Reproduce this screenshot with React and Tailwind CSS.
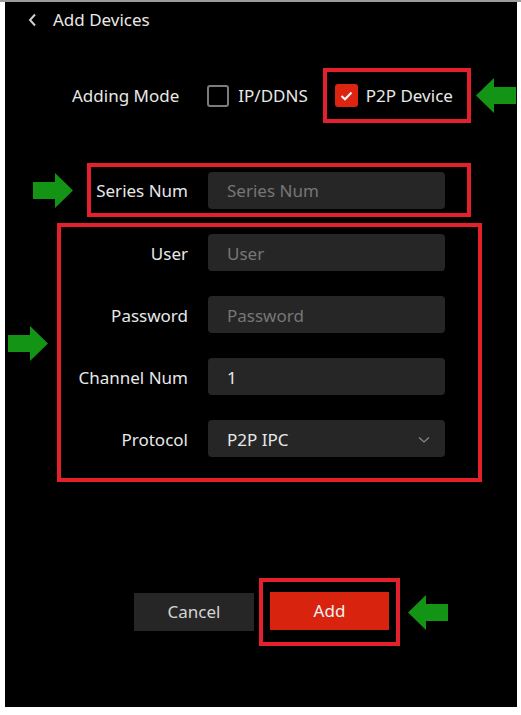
import { useState } from 'react';

const font = { fontFamily: '"Noto Sans", "Open Sans", sans-serif' };

const GreenArrow = ({ dir = 'right' }) => (
  <svg width="40" height="35" viewBox="0 0 40 35" className="shrink-0">
    {dir === 'right' ? (
      <polygon points="0,9 22,9 22,0 40,17.5 22,35 22,26 0,26" fill="#149414" />
    ) : (
      <polygon points="40,9 18,9 18,0 0,17.5 18,35 18,26 40,26" fill="#149414" />
    )}
  </svg>
);

const Field = ({ value, placeholder, select }) => (
  <div className="ml-[20px] flex h-[37px] w-[237px] items-center justify-between rounded-[4px] bg-[#262626] pl-[19px] pr-[15px] pt-[2px] text-[17px]">
    {value ? (
      <span className="text-[#e8e8e8]">{value}</span>
    ) : (
      <span className="text-[#767676]">{placeholder}</span>
    )}
    {select && (
      <svg width="12" height="8" viewBox="0 0 12 8">
        <polyline points="1,1.5 6,6 11,1.5" fill="none" stroke="#8a8a8a" strokeWidth="1.2" />
      </svg>
    )}
  </div>
);

const Row = ({ label, labelWidth, ...rest }) => (
  <div className="flex items-center">
    <div className="pt-[2px] text-right text-[17px] text-[#e8e8e8]" style={{ width: labelWidth }}>
      {label}
    </div>
    <Field {...rest} />
  </div>
);

export default function App() {
  const [mode, setMode] = useState('p2p');

  return (
    <div className="h-[715px] w-[521px] bg-white" style={font}>
      <div className="h-[2px] w-full bg-[#9c9c9c]" />
      <div className="ml-[5px] h-[705px] w-[512px] bg-black text-[#e8e8e8]">
        {/* header */}
        <div className="flex h-[36px] items-center pl-[23px]">
          <svg width="9" height="14" viewBox="0 0 9 14">
            <polyline points="7,1.5 2,7 7,12.5" fill="none" stroke="#d0d0d0" strokeWidth="2" />
          </svg>
          <span className="ml-[16px] text-[17px]">Add Devices</span>
        </div>

        {/* adding mode */}
        <div className="mt-[30px] flex items-center pl-[67px]">
          <span className="text-[17px]">Adding Mode</span>
          <button
            type="button"
            onClick={() => setMode('ip')}
            className="ml-[28px] flex items-center"
          >
            <span
              className={`flex h-[22px] w-[22px] items-center justify-center rounded-[3px] ${
                mode === 'ip' ? 'bg-[#dc2410]' : 'border-2 border-[#7c7c7c]'
              }`}
            />
            <span className="ml-[9px] text-[17px] text-[#e8e8e8]">IP/DDNS</span>
          </button>
          <div className="ml-[15px] flex h-[55px] items-center border-4 border-[#e3202c] pl-[8px] pr-[14px]">
            <button type="button" onClick={() => setMode('p2p')} className="flex items-center">
              <span className="flex h-[23px] w-[23px] items-center justify-center rounded-[3px] bg-[#dc2410]">
                <svg width="13" height="10" viewBox="0 0 13 10">
                  <polyline points="1.5,5 5,8.3 11.5,1.5" fill="none" stroke="#fff" strokeWidth="2" />
                </svg>
              </span>
              <span className="ml-[8px] text-[17px] text-[#e8e8e8]">P2P Device</span>
            </button>
          </div>
          <div className="ml-[5px]">
            <GreenArrow dir="left" />
          </div>
        </div>

        {/* series num */}
        <div className="mt-[40px] flex items-center pl-[28px]">
          <GreenArrow />
          <div className="ml-[14px] flex h-[54px] w-[384px] items-center border-4 border-[#e3202c]">
            <Row label="Series Num" labelWidth={97} placeholder="Series Num" />
          </div>
        </div>

        {/* credentials */}
        <div className="mt-[6px] flex items-start pl-[3px]">
          <div className="mt-[103px]">
            <GreenArrow />
          </div>
          <div className="ml-[9px] flex h-[259px] w-[425px] flex-col gap-[25px] border-4 border-[#e3202c] pt-[7px]">
            <Row label="User" labelWidth={127} placeholder="User" />
            <Row label="Password" labelWidth={127} placeholder="Password" />
            <Row label="Channel Num" labelWidth={127} value="1" />
            <Row label="Protocol" labelWidth={127} value="P2P IPC" select />
          </div>
        </div>

        {/* buttons */}
        <div className="mt-[96px] flex items-center pl-[129px]">
          <button
            type="button"
            className="h-[38px] w-[120px] bg-[#262626] text-[17px] text-[#d4d4d4]"
          >
            Cancel
          </button>
          <div className="ml-[5px] border-4 border-[#e3202c] pb-[12px] pl-[7px] pr-[7px] pt-[10px]">
            <button
              type="button"
              className="block h-[38px] w-[119px] bg-[#d8240e] text-[17px] text-[#f2f2f2]"
            >
              Add
            </button>
          </div>
          <div className="ml-[8px]">
            <GreenArrow dir="left" />
          </div>
        </div>
      </div>
    </div>
  );
}
